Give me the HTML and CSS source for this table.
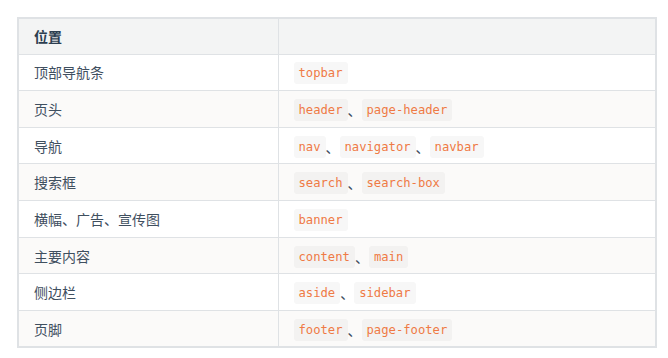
FILE: index.html
```html
<!DOCTYPE html>
<html lang="zh">
<head>
<meta charset="utf-8">
<link rel="stylesheet" href="styles.css">
</head>
<body>
<table class="tbl">
  <thead>
    <tr><th class="c1">位置</th><th class="c2"></th></tr>
  </thead>
  <tbody>
    <tr><td>顶部导航条</td><td><code>topbar</code></td></tr>
    <tr><td>页头</td><td><code>header</code><span class="sep">、</span><code>page-header</code></td></tr>
    <tr><td>导航</td><td><code>nav</code><span class="sep">、</span><code>navigator</code><span class="sep">、</span><code>navbar</code></td></tr>
    <tr><td>搜索框</td><td><code>search</code><span class="sep">、</span><code>search-box</code></td></tr>
    <tr><td>横幅、广告、宣传图</td><td><code>banner</code></td></tr>
    <tr><td>主要内容</td><td><code>content</code><span class="sep">、</span><code>main</code></td></tr>
    <tr><td>侧边栏</td><td><code>aside</code><span class="sep">、</span><code>sidebar</code></td></tr>
    <tr><td>页脚</td><td><code>footer</code><span class="sep">、</span><code>page-footer</code></td></tr>
  </tbody>
</table>
</body>
</html>
```
FILE: styles.css
```css
html, body {
  margin: 0;
  padding: 0;
  background: #ffffff;
}
body {
  padding: 17px 0 0 17px;
  font-family: "Noto Sans CJK SC", "Noto Sans", sans-serif;
  font-size: 14px;
  color: #2c3e50;
}
.tbl {
  border-collapse: collapse;
  width: 640px;
  table-layout: fixed;
  border: 2px solid #dfe2e5;
}
.tbl th, .tbl td {
  border: 1px solid #dfe2e5;
  padding: 0 15px;
  text-align: left;
  height: 36.67px;
  box-sizing: border-box;
  line-height: 22px;
  vertical-align: middle;
}
.tbl .c1 { width: 260px; }
.tbl th {
  background: #f3f4f4;
  font-weight: 700;
  height: 36px;
  color: #2c3e50;
}
.tbl tbody tr:nth-child(odd) { background: #ffffff; }
.tbl tbody tr:nth-child(even) { background: #fbfaf9; }
.tbl td { color: #3f4f5f; }
code {
  font-family: "DejaVu Sans Mono", monospace;
  font-size: 12.2px;
  line-height: 16px;
  padding: 3px 5px;
  border-radius: 3px;
  background: rgba(27, 31, 35, 0.035);
  color: #ef7a45;
  display: inline-block;
  vertical-align: middle;
}
.sep {
  font-family: "Noto Sans CJK SC", sans-serif;
  font-size: 14px;
  color: #3f4f5f;
  vertical-align: middle;
}
```
